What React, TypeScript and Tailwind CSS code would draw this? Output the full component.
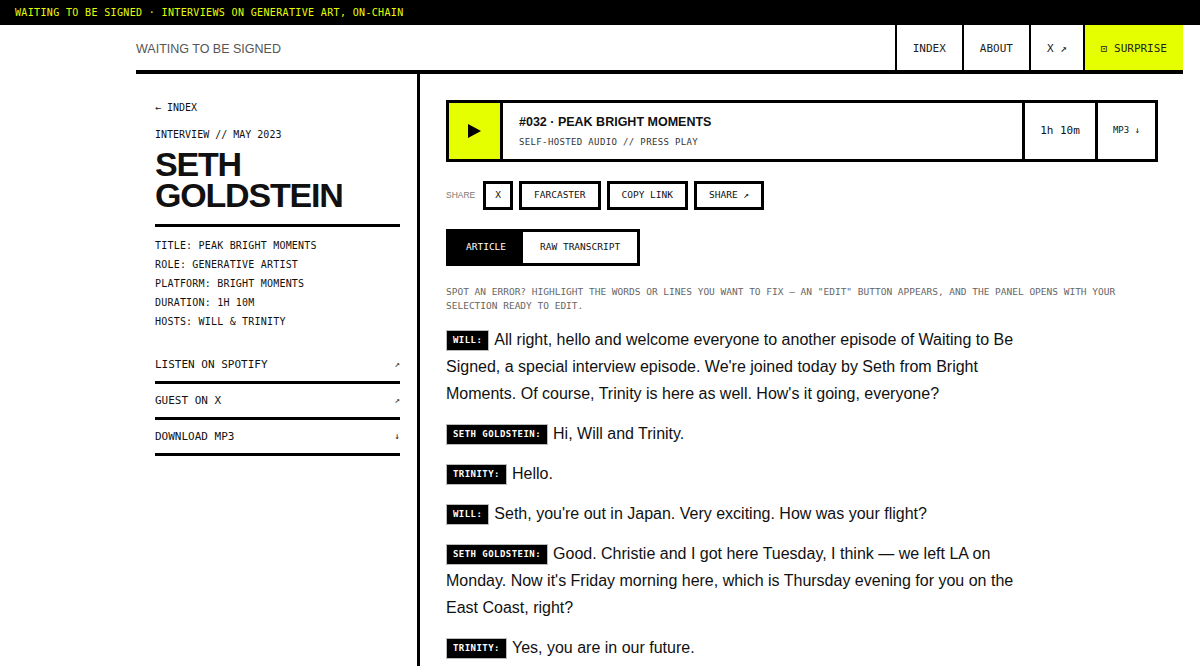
const mono = "font-['DejaVu_Sans_Mono','Liberation_Mono',monospace]"
const sans = "font-['Liberation_Sans',Arial,sans-serif]"

const meta = [
  'TITLE: PEAK BRIGHT MOMENTS',
  'ROLE: GENERATIVE ARTIST',
  'PLATFORM: BRIGHT MOMENTS',
  'DURATION: 1H 10M',
  'HOSTS: WILL & TRINITY',
]

const links = [
  { label: 'LISTEN ON SPOTIFY', icon: '↗' },
  { label: 'GUEST ON X', icon: '↗' },
  { label: 'DOWNLOAD MP3', icon: '↓' },
]

const transcript = [
  { who: 'WILL:', text: "All right, hello and welcome everyone to another episode of Waiting to Be Signed, a special interview episode. We're joined today by Seth from Bright Moments. Of course, Trinity is here as well. How's it going, everyone?" },
  { who: 'SETH GOLDSTEIN:', text: 'Hi, Will and Trinity.' },
  { who: 'TRINITY:', text: 'Hello.' },
  { who: 'WILL:', text: "Seth, you're out in Japan. Very exciting. How was your flight?" },
  { who: 'SETH GOLDSTEIN:', text: "Good. Christie and I got here Tuesday, I think — we left LA on Monday. Now it's Friday morning here, which is Thursday evening for you on the East Coast, right?" },
  { who: 'TRINITY:', text: 'Yes, you are in our future.' },
]

const App = () => {
  return (
    <div className="min-h-screen bg-white text-[#111]">
      {/* ticker */}
      <div className={`h-[25px] bg-black flex items-center px-[15px] text-[#e6ff00] text-[10px] tracking-[0.035em] ${mono}`}>
        WAITING TO BE SIGNED · INTERVIEWS ON GENERATIVE ART, ON-CHAIN
      </div>

      <div className="pl-[136px] pr-[17px]">
        <header className="h-[49px] flex justify-between border-b-4 border-black">
          <div className={`flex items-center pt-[3px] text-[12.5px] text-[#555] ${sans}`}>WAITING TO BE SIGNED</div>
          <nav className={`flex text-[11px] text-[#222] ${mono}`}>
            <a className="flex items-center pt-[3px] px-[16px] border-l-2 border-black">INDEX</a>
            <a className="flex items-center pt-[3px] px-[16px] border-l-2 border-black">ABOUT</a>
            <a className="flex items-center pt-[3px] px-[16px] border-l-2 border-black">X ↗</a>
            <a className="flex items-center pt-[3px] px-[16px] border-l-2 border-black bg-[#e6ff00]">⊡ SURPRISE</a>
          </nav>
        </header>

        <div className="flex">
          <aside className={`w-[284px] shrink-0 border-r-[3px] border-black pl-[19px] pr-[17px] pt-[27px] min-h-[592px] ${mono}`}>
            <div className="text-[10px] leading-[14px]">← INDEX</div>
            <div className="mt-[13px] text-[10px] leading-[14px]">INTERVIEW // MAY 2023</div>
            <h1 className={`mt-[7px] pb-[13px] border-b-[3px] border-black text-[34px] font-bold leading-[31px] tracking-[-0.035em] ${sans}`}>
              SETH
              <br />
              GOLDSTEIN
            </h1>
            <div className="mt-[9px] text-[10px] leading-[19px] tracking-[0.02em]">
              {meta.map((m) => (
                <div key={m}>{m}</div>
              ))}
            </div>
            <div className="mt-[17px]">
              {links.map((l) => (
                <div key={l.label} className="flex justify-between items-center pt-[8px] pb-[8px] leading-[17px] border-b-[3px] border-black text-[11px]">
                  <span>{l.label}</span>
                  <span className="text-[9px]">{l.icon}</span>
                </div>
              ))}
            </div>
          </aside>

          <main className="flex-1 pl-[26px] pr-[25px] pt-[26px]">
            {/* player */}
            <div className="h-[62px] flex border-[3px] border-black">
              <div className="w-[54px] flex items-center justify-center bg-[#e6ff00] border-r-[3px] border-black">
                <svg width="13" height="14" viewBox="0 0 13 14">
                  <path d="M0 0 L13 7 L0 14 Z" fill="#000" />
                </svg>
              </div>
              <div className="flex-1 flex flex-col justify-center pl-[16px] gap-[8px] pt-[1px]">
                <div className={`text-[12.5px] leading-[14px] font-bold ${sans}`}>#032 · PEAK BRIGHT MOMENTS</div>
                <div className={`text-[9px] leading-[11px] tracking-[0.04em] text-[#333] ${mono}`}>SELF-HOSTED AUDIO // PRESS PLAY</div>
              </div>
              <div className={`w-[73px] flex items-center justify-center border-l-[3px] border-black text-[11px] ${mono}`}>1h 10m</div>
              <div className={`w-[60px] flex items-center justify-center border-l-[3px] border-black text-[9px] ${mono}`}>MP3 ↓</div>
            </div>

            {/* share */}
            <div className="mt-[19px] flex items-center gap-[6px]">
              <span className={`text-[8.5px] text-[#777] mr-[2px] ${sans}`}>SHARE</span>
              <button className={`h-[29px] px-[9px] border-[3px] border-black text-[9.5px] ${mono}`}>X</button>
              <button className={`h-[29px] px-[12px] border-[3px] border-black text-[9.5px] ${mono}`}>FARCASTER</button>
              <button className={`h-[29px] px-[12px] border-[3px] border-black text-[9.5px] ${mono}`}>COPY LINK</button>
              <button className={`h-[29px] px-[12px] border-[3px] border-black text-[9.5px] ${mono}`}>SHARE ↗</button>
            </div>

            {/* tabs */}
            <div className={`mt-[19px] inline-flex h-[37px] border-[3px] border-black text-[9.5px] ${mono}`}>
              <div className="flex items-center px-[17px] bg-black text-white">ARTICLE</div>
              <div className="flex items-center px-[17px]">RAW TRANSCRIPT</div>
            </div>

            <p className={`mt-[19px] text-[9.5px] leading-[13.5px] text-[#666] max-w-[670px] ${mono}`}>
              SPOT AN ERROR? HIGHLIGHT THE WORDS OR LINES YOU WANT TO FIX — AN "EDIT" BUTTON APPEARS, AND THE PANEL OPENS WITH YOUR SELECTION READY TO EDIT.
            </p>

            <div className={`mt-[14px] max-w-[585px] text-[16px] leading-[27px] ${sans}`}>
              {transcript.map((t, i) => (
                <p key={i} className="mb-[13px]">
                  <span className={`inline-block align-middle mr-[5px] px-[6px] py-[3px] leading-[13px] bg-black text-white text-[9px] font-bold tracking-[0.05em] border border-[#bbb] ${mono}`}>
                    {t.who}
                  </span>
                  {t.text}
                </p>
              ))}
            </div>
          </main>
        </div>
      </div>
    </div>
  )
}

export default App
